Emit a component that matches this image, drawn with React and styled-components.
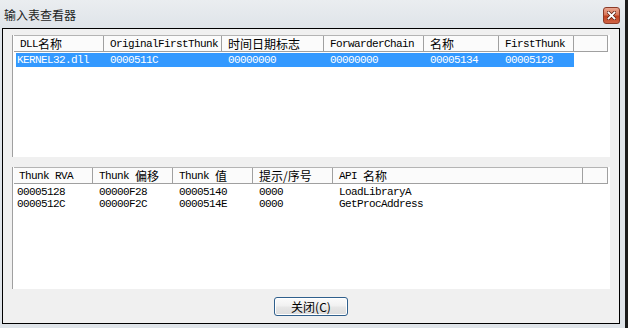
import React from "react";
import styled, { createGlobalStyle } from "styled-components";

const GlobalStyle = createGlobalStyle`
  html, body {
    margin: 0;
    padding: 0;
    background: #dde3e8;
  }
  body {
    font-family: "Noto Sans CJK SC", sans-serif;
  }
`;

const mono = `"Liberation Mono", "DejaVu Sans Mono", "Noto Sans CJK SC", monospace`;

const Window = styled.div`
  width: 628px;
  height: 328px;
  box-sizing: border-box;
  display: flex;
  flex-direction: column;
  background: #dfe4e9;
  border-right: 3px solid #1b1b1b;
`;

const TitleBar = styled.div`
  height: 28px;
  flex: 0 0 28px;
  display: flex;
  align-items: flex-start;
  justify-content: space-between;
  padding: 0 5px 0 4px;
  background: linear-gradient(to bottom, #eaedf0, #dfe4e9);
`;

const Title = styled.div`
  margin-top: 7px;
  font-size: 12px;
  line-height: 16px;
  color: #1e1e1e;
  font-family: "Noto Sans CJK SC", sans-serif;
`;

const CloseButton = styled.div`
  margin-top: 7px;
  width: 17px;
  height: 17px;
  box-sizing: border-box;
  border: 1px solid #8c3b28;
  border-radius: 3px;
  background: linear-gradient(to bottom, #eaa690 0%, #d9775a 45%, #c0401f 55%, #cf6446 100%);
  display: flex;
  align-items: center;
  justify-content: center;
`;

const Body = styled.div`
  flex: 1;
  padding: 0 5px 4px 2px;
  display: flex;
`;

const Client = styled.div`
  flex: 1;
  border: 1px solid #000;
  background: #f0f0f0;
  padding: 6px 9px 0 9px;
  display: flex;
  flex-direction: column;
`;

const ListBox = styled.div`
  height: 122px;
  flex: 0 0 122px;
  background: #fff;
  border-left: 1px solid #a0a0a0;
  padding-left: 1px;
  overflow: hidden;
  margin-bottom: ${(p) => (p.$gap ? "10px" : "0")};
`;

const Header = styled.div`
  display: flex;
  height: 17px;
  box-sizing: border-box;
  border-top: 1px solid #b4b4b4;
  border-bottom: 1px solid #a0a0a0;
  background: #fbfbfb;
  width: 594px;
`;

const HeadCell = styled.div`
  width: ${(p) => p.$w}px;
  flex: 0 0 ${(p) => p.$w}px;
  box-sizing: border-box;
  display: flex;
  align-items: center;
  border-right: 1px solid #a0a0a0;
  padding-left: ${(p) => p.$pad}px;
  font-family: ${mono};
  font-size: 11px;
  letter-spacing: -0.6px;
  color: #000;
  white-space: pre;
  overflow: hidden;
`;

const Han = styled.span`
  font-family: "Noto Sans CJK SC", sans-serif;
  font-size: 12px;
  line-height: 14px;
  letter-spacing: 0;
`;

const Rows = styled.div`
  padding: ${(p) => p.$pad};
`;

const Row = styled.div`
  display: flex;
  height: ${(p) => p.$h}px;
  width: max-content;
  background: ${(p) => (p.$selected ? "#3399ff" : "transparent")};
  color: ${(p) => (p.$selected ? "#fff" : "#000")};
`;

const Cell = styled.div`
  width: ${(p) => p.$w}px;
  flex: 0 0 ${(p) => p.$w}px;
  box-sizing: border-box;
  padding-left: ${(p) => p.$pad}px;
  font-family: ${mono};
  font-size: 11px;
  letter-spacing: -0.6px;
  line-height: ${(p) => p.$lh}px;
  white-space: nowrap;
  overflow: hidden;
`;

const ButtonBar = styled.div`
  flex: 1;
  display: flex;
  justify-content: center;
  align-items: flex-start;
  padding-top: 8px;
`;

const Button = styled.div`
  width: 74px;
  height: 19px;
  box-sizing: border-box;
  border: 1px solid #2f5f8c;
  border-radius: 3px;
  background: linear-gradient(to bottom, #fbfbfb 0%, #f1f1f1 45%, #e6e6e6 55%, #dcdcdc 100%);
  box-shadow: inset 0 0 0 1px #ffffff;
  display: flex;
  align-items: center;
  justify-content: center;
  font-size: 12px;
  line-height: 17px;
  color: #000;
  font-family: "Noto Sans CJK SC", sans-serif;
`;

const topCols = [
  { w: 90, label: <>DLL<Han>名称</Han></> },
  { w: 118, label: "OriginalFirstThunk" },
  { w: 102, label: <Han>时间日期标志</Han> },
  { w: 100, label: "ForwarderChain" },
  { w: 75, label: <Han>名称</Han> },
  { w: 75, label: "FirstThunk" },
  { w: 34, label: "" },
];

const topRows = [
  ["KERNEL32.dll", "0000511C", "00000000", "00000000", "00005134", "00005128"],
];

const bottomCols = [
  { w: 79, label: "Thunk RVA" },
  { w: 80, label: <>Thunk <Han>偏移</Han></> },
  { w: 80, label: <>Thunk <Han>值</Han></> },
  { w: 80, label: <Han>提示/序号</Han> },
  { w: 250, label: <>API <Han>名称</Han></> },
  { w: 25, label: "" },
];

const bottomRows = [
  ["00005128", "00000F28", "00005140", "0000", "LoadLibraryA"],
  ["0000512C", "00000F2C", "0000514E", "0000", "GetProcAddress"],
];

function CloseIcon() {
  return (
    <svg width="9" height="9" viewBox="0 0 9 9">
      <path d="M1.5 1.5 L7.5 7.5 M7.5 1.5 L1.5 7.5" stroke="#5a1d10" strokeWidth="3.2" strokeLinecap="square" />
      <path d="M1.5 1.5 L7.5 7.5 M7.5 1.5 L1.5 7.5" stroke="#ffffff" strokeWidth="1.8" strokeLinecap="square" />
    </svg>
  );
}

export default function App() {
  return (
    <>
      <GlobalStyle />
      <Window>
        <TitleBar>
          <Title>输入表查看器</Title>
          <CloseButton>
            <CloseIcon />
          </CloseButton>
        </TitleBar>
        <Body>
          <Client>
            <ListBox $gap>
              <Header>
                {topCols.map((c, i) => (
                  <HeadCell key={i} $w={c.w} $pad={6}>{c.label}</HeadCell>
                ))}
              </Header>
              <Rows $pad="1px 0 0 2px">
                {topRows.map((r, i) => (
                  <Row key={i} $h={14} $selected>
                    {r.map((v, j) => (
                      <Cell key={j} $w={j === 0 ? 88 : topCols[j].w} $pad={j === 0 ? 1 : 6} $lh={14}>
                        {v}
                      </Cell>
                    ))}
                  </Row>
                ))}
              </Rows>
            </ListBox>
            <ListBox>
              <Header>
                {bottomCols.map((c, i) => (
                  <HeadCell key={i} $w={c.w} $pad={i === 0 ? 5 : 6}>{c.label}</HeadCell>
                ))}
              </Header>
              <Rows $pad="2px 0 0 0">
                {bottomRows.map((r, i) => (
                  <Row key={i} $h={12}>
                    {r.map((v, j) => (
                      <Cell key={j} $w={bottomCols[j].w} $pad={j === 0 ? 3 : 6} $lh={12}>
                        {v}
                      </Cell>
                    ))}
                  </Row>
                ))}
              </Rows>
            </ListBox>
            <ButtonBar>
              <Button>关闭(C)</Button>
            </ButtonBar>
          </Client>
        </Body>
      </Window>
    </>
  );
}
